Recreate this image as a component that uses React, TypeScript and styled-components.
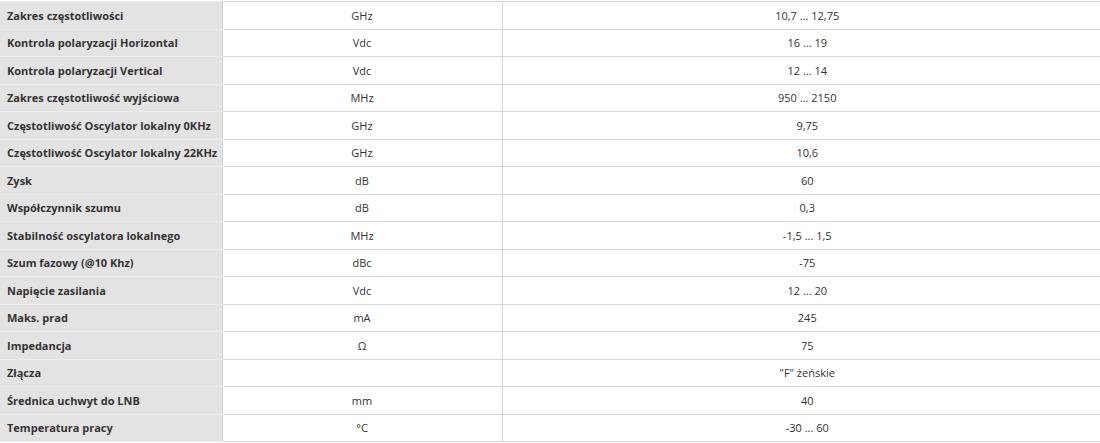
import styled, { createGlobalStyle } from "styled-components";

const GlobalStyle = createGlobalStyle`
  body {
    margin: 0;
    background: #ffffff;
    font-family: "Open Sans", "DejaVu Sans", sans-serif;
  }
`;

const Wrapper = styled.div`
  padding-top: 1px;
`;

const SpecTable = styled.table`
  width: 1100px;
  border-collapse: collapse;
  table-layout: fixed;
  font-size: 11px;
  color: #333333;
`;

const Row = styled.tr`
  height: 27.5px;
  border-top: 1px solid #d6d6d6;
  border-bottom: 1px solid #d6d6d6;
`;

const Label = styled.td`
  width: 222px;
  background: #e3e3e3;
  font-weight: 700;
  padding: 0 2px 0 7px;
  white-space: nowrap;
  border-right: 1px solid #d0d0d0;
  border-top: 1px solid #ececec;
  border-bottom: 1px solid #ececec;
  box-sizing: border-box;
`;

const Cell = styled.td<{ $wide?: boolean }>`
  width: ${(props) => (props.$wide ? "auto" : "280px")};
  box-sizing: border-box;
  text-align: center;
  padding: ${(props) => (props.$wide ? "0 8px 0 20px" : "0 8px")};
  white-space: nowrap;
  border-right: ${(props) => (props.$wide ? "none" : "1px solid #d6d6d6")};
`;

interface ISpec {
  name: string;
  unit: string;
  value: string;
}

const specs: ISpec[] = [
  { name: "Zakres częstotliwości", unit: "GHz", value: "10,7 ... 12,75" },
  { name: "Kontrola polaryzacji Horizontal", unit: "Vdc", value: "16 ... 19" },
  { name: "Kontrola polaryzacji Vertical", unit: "Vdc", value: "12 ... 14" },
  { name: "Zakres częstotliwość wyjściowa", unit: "MHz", value: "950 ... 2150" },
  { name: "Częstotliwość Oscylator lokalny 0KHz", unit: "GHz", value: "9,75" },
  { name: "Częstotliwość Oscylator lokalny 22KHz", unit: "GHz", value: "10,6" },
  { name: "Zysk", unit: "dB", value: "60" },
  { name: "Współczynnik szumu", unit: "dB", value: "0,3" },
  { name: "Stabilność oscylatora lokalnego", unit: "MHz", value: "-1,5 ... 1,5" },
  { name: "Szum fazowy (@10 Khz)", unit: "dBc", value: "-75" },
  { name: "Napięcie zasilania", unit: "Vdc", value: "12 ... 20" },
  { name: "Maks. prad", unit: "mA", value: "245" },
  { name: "Impedancja", unit: "Ω", value: "75" },
  { name: "Złącza", unit: "", value: "\"F\" żeńskie" },
  { name: "Średnica uchwyt do LNB", unit: "mm", value: "40" },
  { name: "Temperatura pracy", unit: "°C", value: "-30 ... 60" },
];

function App() {
  return (
    <Wrapper>
      <GlobalStyle />
      <SpecTable>
        <tbody>
          {specs.map((spec) => (
            <Row key={spec.name}>
              <Label>{spec.name}</Label>
              <Cell>{spec.unit}</Cell>
              <Cell $wide>{spec.value}</Cell>
            </Row>
          ))}
        </tbody>
      </SpecTable>
    </Wrapper>
  );
}

export default App;
